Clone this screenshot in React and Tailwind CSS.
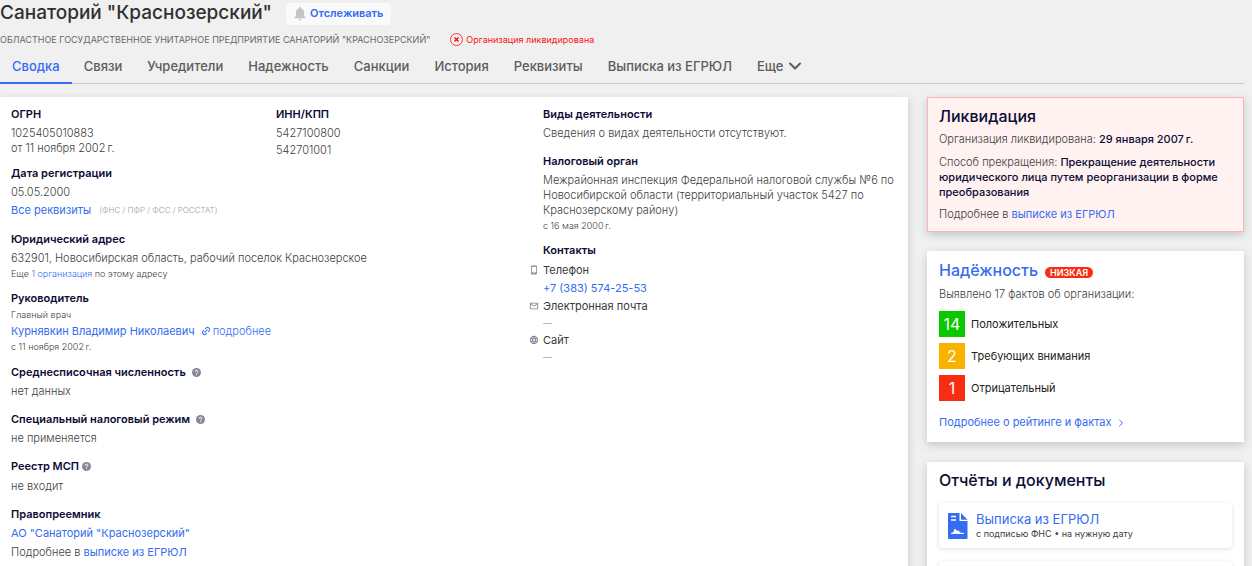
import React from 'react';
import { ChevronDown, ChevronRight, Link2 } from 'lucide-react';
import { MdOutlineEmail, MdPhoneAndroid, MdLanguage } from 'react-icons/md';

const TABS = ['Связи', 'Учредители', 'Надежность', 'Санкции', 'История', 'Реквизиты', 'Выписка из ЕГРЮЛ'];

const FACTS = [
  { count: 14, label: 'Положительных', color: 'bg-[#0ac800]' },
  { count: 2, label: 'Требующих внимания', color: 'bg-[#fab200]' },
  { count: 1, label: 'Отрицательный', color: 'bg-[#f82d14]' },
];

const Heading = ({ children, className = '' }) => (
  <h3 className={`flex items-center font-semibold text-[#0c0c36] ${className}`}>{children}</h3>
);

const A = ({ children, className = '' }) => (
  <a href="#" className={`text-[#356cf0] ${className}`}>
    {children}
  </a>
);

const Help = ({ className = 'ml-1.5' }) => (
  <button type="button" aria-label="Справка" className={className}>
    <svg viewBox="0 0 10 10" className="h-[9px] w-[9px]">
      <circle cx="5" cy="5" r="5" fill="#848a94" />
      <path d="M3.5 4a1.5 1.4 0 1 1 2.3 1.1c-.5.3-.8.5-.8 1M5 7.2v.9" fill="none" stroke="#fff" strokeWidth="1.1" />
    </svg>
  </button>
);

const Bell = () => (
  <svg viewBox="0 0 12 14" className="mt-0.5 h-[14px] w-3" fill="#c4c4c4">
    <path d="M6 0c.7 0 1.1.5 1.1 1.1v.3c1.9.5 3 2 3 4V9l1.7 1.7v.6H.2v-.6L1.9 9V5.4c0-2 1.1-3.500 3-4v-.3C4.900.5 5.300 0 6 0zM4.600 12h2.800c0 .8-.6 1.400-1.400 1.400S4.600 12.800 4.600 12z" />
  </svg>
);

const DocIcon = () => (
  <svg viewBox="0 0 20 26" className="h-[26px] w-5 shrink-0">
    <path d="M1 0h10.500v8H19.500v17a1 1 0 0 1-1 1H1a1 1 0 0 1-1-1V1a1 1 0 0 1 1-1z" fill="#356cf0" />
    <path d="M13 0l6.500 6.700H13z" fill="#356cf0" />
    <path d="M3 3.500h5M3 7h5" stroke="#fff" strokeWidth="1.300" />
    <path d="M3 20.500l2.500-1 1.500-3.500 2 2.500 1.300-.7 2 2.200 3.700.5z" fill="#fff" stroke="#fff" strokeWidth=".8" />
  </svg>
);

const Header = () => (
  <header>
    <div className="flex h-[26px] items-center gap-3.5">
      <h1 className="text-[19px] leading-[26px] font-medium text-[#303030]">Санаторий "Краснозерский"</h1>
      <button
        type="button"
        className="mt-0.5 flex h-[22px] items-center gap-1 rounded-sm bg-[#fafafa] px-2 pb-0.5 text-[11px] font-semibold text-[#356cf0]"
      >
        <Bell />
        Отслеживать
      </button>
    </div>
    <div className="mt-[5px] flex h-4 items-center text-[9px] text-[#686868]">
      <span>ОБЛАСТНОЕ ГОСУДАРСТВЕННОЕ УНИТАРНОЕ ПРЕДПРИЯТИЕ САНАТОРИЙ "КРАСНОЗЕРСКИЙ"</span>
      <span className="ml-5 flex items-center gap-[3px] text-[#fb1010]">
        <svg viewBox="0 0 13 13" className="h-[13px] w-[13px]" fill="none" stroke="currentColor">
          <circle cx="6.500" cy="6.500" r="6" strokeWidth=".8" />
          <path d="M4.500 4.500l4 4M8.500 4.500l-4 4" strokeWidth="1.500" />
        </svg>
        Организация ликвидирована
      </span>
    </div>
    <nav className="mr-2 mt-[3px] flex h-[34px] border-b border-[#c8c8c8] text-[13px] font-medium text-[#5c5c5c]">
      <a href="#" className="-mb-px h-[34px] border-b-2 border-[#356cf0] px-3 leading-8 text-[#356cf0]">
        Сводка
      </a>
      <div className="ml-3 flex gap-[25px] leading-8">
        {TABS.map((tab) => (
          <a key={tab} href="#">
            {tab}
          </a>
        ))}
        <button type="button" className="flex h-8 items-center gap-0.5">
          Еще
          <ChevronDown size={20} strokeWidth={2.5} />
        </button>
      </div>
    </nav>
  </header>
);

const Requisites = () => (
  <div>
    <div className="grid grid-cols-[265px_1fr]">
      <div>
        <Heading>ОГРН</Heading>
        <p className="mt-1">
          1025405010883
          <br />
          от 11 ноября 2002&thinsp;г.
        </p>
      </div>
      <div>
        <Heading>ИНН/КПП</Heading>
        <p className="mt-1">5427100800</p>
        <p className="mt-0.5">542701001</p>
      </div>
    </div>

    <Heading className="mt-2">Дата регистрации</Heading>
    <p className="mt-1">05.05.2000</p>
    <p className="mt-[3px] flex items-center gap-2">
      <A className="font-normal">Все реквизиты</A>
      <span className="text-[8px] text-[#a0a0a0]">(ФНС / ПФР / ФСС / РОССТАТ)</span>
    </p>

    <Heading className="mt-3.5">Юридический адрес</Heading>
    <p className="mt-1">632901, Новосибирская область, рабочий поселок Краснозерское</p>
    <p className="text-[9px]">
      Еще <A>1 организация</A> по этому адресу
    </p>

    <Heading className="mt-2.5">Руководитель</Heading>
    <p className="mt-px text-[9px] leading-4">Главный врач</p>
    <p className="flex items-center leading-4">
      <A className="font-normal">Курнявкин Владимир Николаевич</A>
      <A className="ml-1.5 flex items-center gap-0.5">
        <Link2 size={10} strokeWidth={2.5} className="-rotate-45" />
        подробнее
      </A>
    </p>
    <p className="text-[9px] leading-4">с 11 ноября 2002&thinsp;г.</p>

    <Heading className="mt-2.5">
      Среднесписочная численность
      <Help />
    </Heading>
    <p className="mt-1">нет данных</p>

    <Heading className="mt-[13px]">
      Специальный налоговый режим
      <Help />
    </Heading>
    <p className="mt-1">не применяется</p>

    <Heading className="mt-[13px]">
      Реестр МСП
      <Help className="ml-[3px]" />
    </Heading>
    <p className="mt-[5px]">не входит</p>

    <Heading className="mt-[13px]">Правопреемник</Heading>
    <p className="mt-1">
      <A className="font-normal">АО "Санаторий "Краснозерский"</A>
    </p>
    <p className="mt-1">
      Подробнее в <A className="font-normal">выписке из ЕГРЮЛ</A>
    </p>
  </div>
);

const ContactRow = ({ icon: Icon, label }) => (
  <div className="-ml-3.5 flex items-center gap-1 leading-[18px] font-normal text-[#383838]">
    <Icon size={10} className="text-[#7b818c]" />
    {label}
  </div>
);

const Activity = () => (
  <div className="pr-2">
    <Heading>Виды деятельности</Heading>
    <p className="mt-1">Сведения о видах деятельности отсутствуют.</p>

    <Heading className="mt-[13px]">Налоговый орган</Heading>
    <p className="mt-1">
      Межрайонная инспекция Федеральной налоговой службы №6 по Новосибирской области (территориальный участок 5427 по
      Краснозерскому району)
    </p>
    <p className="text-[9px]">с 16 мая 2000&thinsp;г.</p>

    <Heading className="mt-2.5">Контакты</Heading>
    <div className="mt-[3px]">
      <ContactRow icon={MdPhoneAndroid} label="Телефон" />
      <A className="block leading-[18px] font-normal">+7 (383) 574-25-53</A>
      <ContactRow icon={MdOutlineEmail} label="Электронная почта" />
      <p className="text-[9px] leading-4 text-[#808080]">—</p>
      <ContactRow icon={MdLanguage} label="Сайт" />
      <p className="text-[9px] leading-[15px] text-[#808080]">—</p>
    </div>
  </div>
);

const Liquidation = () => (
  <section className="border border-[#ffb3b3] bg-[#fff2f0] px-[11px] pt-2 pb-[9px] shadow-[0_3px_8px_rgba(60,80,100,0.25)]">
    <h2 className="text-base leading-5 font-medium text-[#0c0c36]">Ликвидация</h2>
    <p className="mt-1.5">
      Организация ликвидирована: <span className="font-medium text-[#0c0c36]">29 января 2007&thinsp;г.</span>
    </p>
    <p className="mt-2">
      Способ прекращения:{' '}
      <span className="font-medium text-[#0c0c36]">
        Прекращение деятельности юридического лица путем реорганизации в форме преобразования
      </span>
    </p>
    <p className="mt-[7px]">
      Подробнее в <A className="font-normal">выписке из ЕГРЮЛ</A>
    </p>
  </section>
);

const Reliability = () => (
  <section className="mt-[19px] bg-white px-3 pt-[9px] pb-3 shadow-[0_3px_8px_rgba(60,80,100,0.25)]">
    <h2 className="flex items-center gap-[7px] text-base leading-5 font-medium">
      <A>Надёжность</A>
      <span className="mt-1 rounded-full bg-[#f82d14] px-[5px] text-[9px] leading-[11px] font-semibold text-white">
        НИЗКАЯ
      </span>
    </h2>
    <p className="mt-[7px]">Выявлено 17 фактов об организации:</p>
    <ul className="mt-[9px] flex flex-col gap-1.5">
      {FACTS.map((fact) => (
        <li key={fact.label} className="flex items-center gap-1.5 font-normal text-[#222]">
          <span className={`h-[26px] w-[26px] text-center text-base leading-[26px] text-white ${fact.color}`}>
            {fact.count}
          </span>
          {fact.label}
        </li>
      ))}
    </ul>
    <A className="mt-3.5 flex items-center gap-1 font-normal">
      Подробнее о рейтинге и фактах
      <ChevronRight size={12} />
    </A>
  </section>
);

const Documents = () => (
  <section className="mt-5 bg-white px-3 pt-2 pb-3 shadow-[0_3px_8px_rgba(60,80,100,0.25)]">
    <h2 className="text-base leading-5 font-medium text-[#0c0c36]">Отчёты и документы</h2>
    <a
      href="#"
      className="mt-[13px] flex h-[45px] items-center gap-2 rounded-sm px-[9px] shadow-[0_1px_4px_rgba(50,110,140,0.2)]"
    >
      <DocIcon />
      <span>
        <span className="block text-[13px] leading-4 font-normal text-[#356cf0]">Выписка из ЕГРЮЛ</span>
        <span className="block text-[9px] leading-[14px] font-normal">с подписью ФНС • на нужную дату</span>
      </span>
    </a>
    <div className="mt-[13px] h-[45px] rounded-sm shadow-[0_1px_4px_rgba(50,110,140,0.2)]" />
  </section>
);

export default function App() {
  return (
    <div className="h-screen overflow-hidden bg-[#f0f0f0] font-['Inter','Liberation_Sans',sans-serif] text-[11px] leading-[15px] text-[#404040]">
      <Header />
      <div className="mt-[13px] mr-2 flex items-start gap-[19px] font-light">
        <main className="grid min-h-screen flex-1 grid-cols-[532px_1fr] bg-white pt-2.5 pl-[11px] shadow-[0_3px_8px_rgba(60,80,100,0.25)]">
          <Requisites />
          <Activity />
        </main>
        <aside className="w-[317px] shrink-0">
          <Liquidation />
          <Reliability />
          <Documents />
        </aside>
      </div>
    </div>
  );
}
